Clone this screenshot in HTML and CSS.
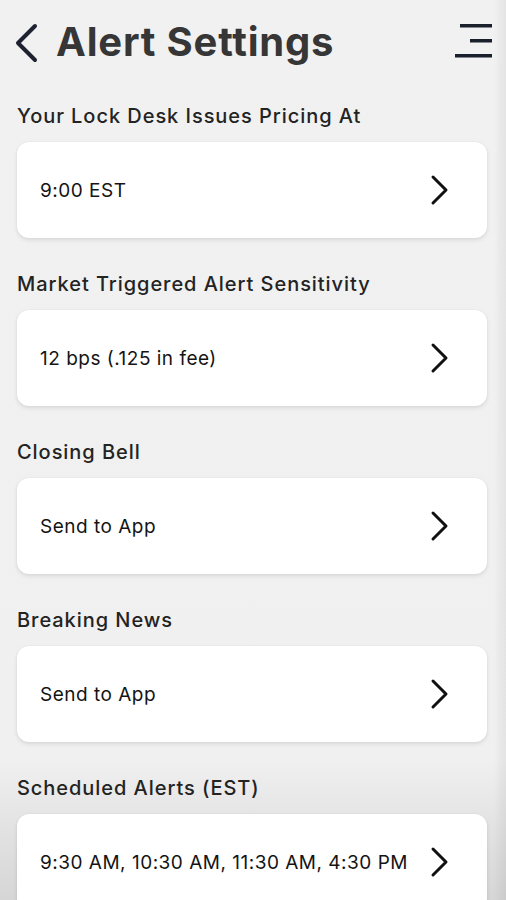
FILE: index.html
```html
<!DOCTYPE html>
<html lang="en">
<head>
<meta charset="utf-8">
<title>Alert Settings</title>
<link rel="stylesheet" href="styles.css">
</head>
<body>
<div class="screen">
  <header class="topbar">
    <svg class="back" width="26" height="40" viewBox="0 0 26 40" aria-hidden="true">
      <path d="M22 3 L5 20 L22 37" fill="none" stroke="#1e2230" stroke-width="4" stroke-linecap="round" stroke-linejoin="round"/>
    </svg>
    <h1 class="title">Alert Settings</h1>
    <svg class="menu" width="38" height="36" viewBox="0 0 38 36" aria-hidden="true">
      <rect x="5" y="0" width="32" height="3.5" fill="#1a1f2c"/>
      <rect x="15" y="15" width="22" height="3.5" fill="#1a1f2c"/>
      <rect x="0" y="30" width="37" height="3.5" fill="#1a1f2c"/>
    </svg>
  </header>

  <main class="list">
    <section class="group">
      <h2 class="label">Your Lock Desk Issues Pricing At</h2>
      <div class="card"><span class="value">9:00 EST</span><svg class="chev" width="20" height="32" viewBox="0 0 20 32"><path d="M3 3 L16 16 L3 29" fill="none" stroke="#111" stroke-width="3" stroke-linecap="round" stroke-linejoin="round"/></svg></div>
    </section>
    <section class="group">
      <h2 class="label">Market Triggered Alert Sensitivity</h2>
      <div class="card"><span class="value">12 bps (.125 in fee)</span><svg class="chev" width="20" height="32" viewBox="0 0 20 32"><path d="M3 3 L16 16 L3 29" fill="none" stroke="#111" stroke-width="3" stroke-linecap="round" stroke-linejoin="round"/></svg></div>
    </section>
    <section class="group">
      <h2 class="label">Closing Bell</h2>
      <div class="card"><span class="value">Send to App</span><svg class="chev" width="20" height="32" viewBox="0 0 20 32"><path d="M3 3 L16 16 L3 29" fill="none" stroke="#111" stroke-width="3" stroke-linecap="round" stroke-linejoin="round"/></svg></div>
    </section>
    <section class="group">
      <h2 class="label">Breaking News</h2>
      <div class="card"><span class="value">Send to App</span><svg class="chev" width="20" height="32" viewBox="0 0 20 32"><path d="M3 3 L16 16 L3 29" fill="none" stroke="#111" stroke-width="3" stroke-linecap="round" stroke-linejoin="round"/></svg></div>
    </section>
    <section class="group">
      <h2 class="label">Scheduled Alerts (EST)</h2>
      <div class="card"><span class="value">9:30 AM, 10:30 AM, 11:30 AM, 4:30 PM</span><svg class="chev" width="20" height="32" viewBox="0 0 20 32"><path d="M3 3 L16 16 L3 29" fill="none" stroke="#111" stroke-width="3" stroke-linecap="round" stroke-linejoin="round"/></svg></div>
    </section>
  </main>
</div>
</body>
</html>
```

FILE: styles.css
```css
* { box-sizing: border-box; }
html, body { margin: 0; padding: 0; }
body {
  width: 506px;
  height: 900px;
  overflow: hidden;
  font-family: Inter, "Open Sans", sans-serif;
  background: #f1f1f1;
}
.screen {
  width: 506px;
  height: 900px;
  background:
    linear-gradient(to right, rgba(0,0,0,0) 494px, rgba(0,0,0,0.03) 500px, rgba(0,0,0,0.05) 506px),
    linear-gradient(to bottom, #f1f1f1 0px, #f0f0f0 760px, #e2e2e2 830px, #d6d6d6 900px);
}
.topbar {
  display: flex;
  align-items: center;
  height: 66px;
  padding: 18px 13px 0 13px;
}
.back { flex: none; margin-top: 1px; }
.title {
  margin: 0 0 0 17px;
  font-size: 40px;
  line-height: 48px;
  font-weight: 700;
  color: #363636;
  letter-spacing: 0.8px;
  flex: 1;
}
.menu { flex: none; margin-top: 0px; }
.list {
  display: flex;
  flex-direction: column;
  gap: 34px;
  padding: 38px 19px 0 17px;
}
.group {
  display: flex;
  flex-direction: column;
  gap: 14px;
}
.label {
  margin: 0;
  font-size: 20px;
  line-height: 24px;
  font-weight: 500;
  letter-spacing: 0.95px;
  color: #232323;
}
.card {
  height: 96px;
  background: #fff;
  border-radius: 12px;
  box-shadow: 0 2px 4px rgba(0,0,0,0.10), 0 0 2px rgba(0,0,0,0.05);
  display: flex;
  align-items: center;
  justify-content: space-between;
  padding: 0 37px 0 23px;
}
.value {
  font-size: 19px;
  color: #141414;
  font-weight: 400;
  letter-spacing: 0.5px;
}
.chev { flex: none; }
```
